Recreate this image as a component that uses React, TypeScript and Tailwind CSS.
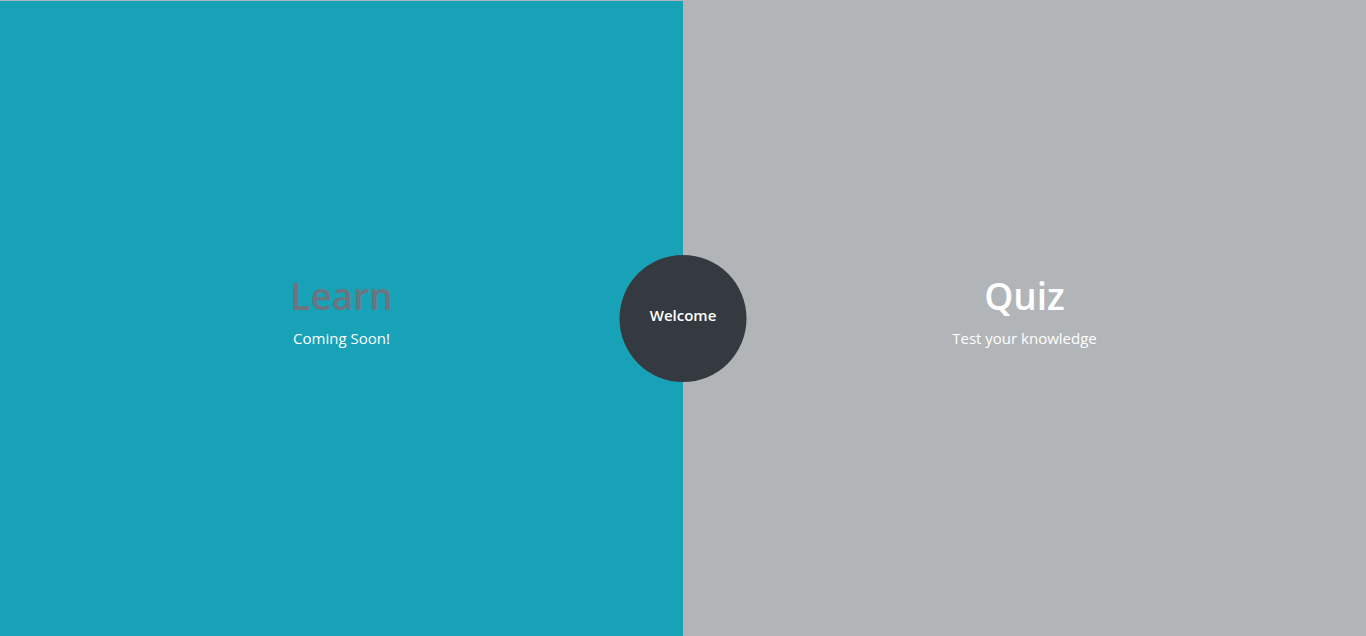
import React from 'react';

function App() {
  return (
    <main
      className="relative flex h-[636px] w-full overflow-hidden"
      style={{ fontFamily: '"Open Sans", "Noto Sans", sans-serif' }}
    >
      {/* Left: Learn */}
      <section className="flex w-1/2 flex-col items-center justify-center border-t border-[#b0b4b8] bg-[#17a2b8] pb-[14px]">
        <h1 className="text-[37px] font-semibold leading-[1.2] text-[#6c757d]">Learn</h1>
        <p className="mt-[9px] text-[15px] text-white">Coming Soon!</p>
      </section>

      {/* Right: Quiz */}
      <section className="flex w-1/2 flex-col items-center justify-center bg-[#b1b5b8] pb-[13px]">
        <h1 className="text-[37px] font-semibold leading-[1.2] text-white">Quiz</h1>
        <p className="mt-[9px] text-[15px] text-white">Test your knowledge</p>
      </section>

      {/* Center badge */}
      <div className="absolute left-1/2 top-[255px] flex h-[127px] w-[127px] -translate-x-1/2 items-center justify-center rounded-full bg-[#343a40] pb-[6px]">
        <span className="text-[15px] font-semibold text-white">Welcome</span>
      </div>
    </main>
  );
}

export default App;
